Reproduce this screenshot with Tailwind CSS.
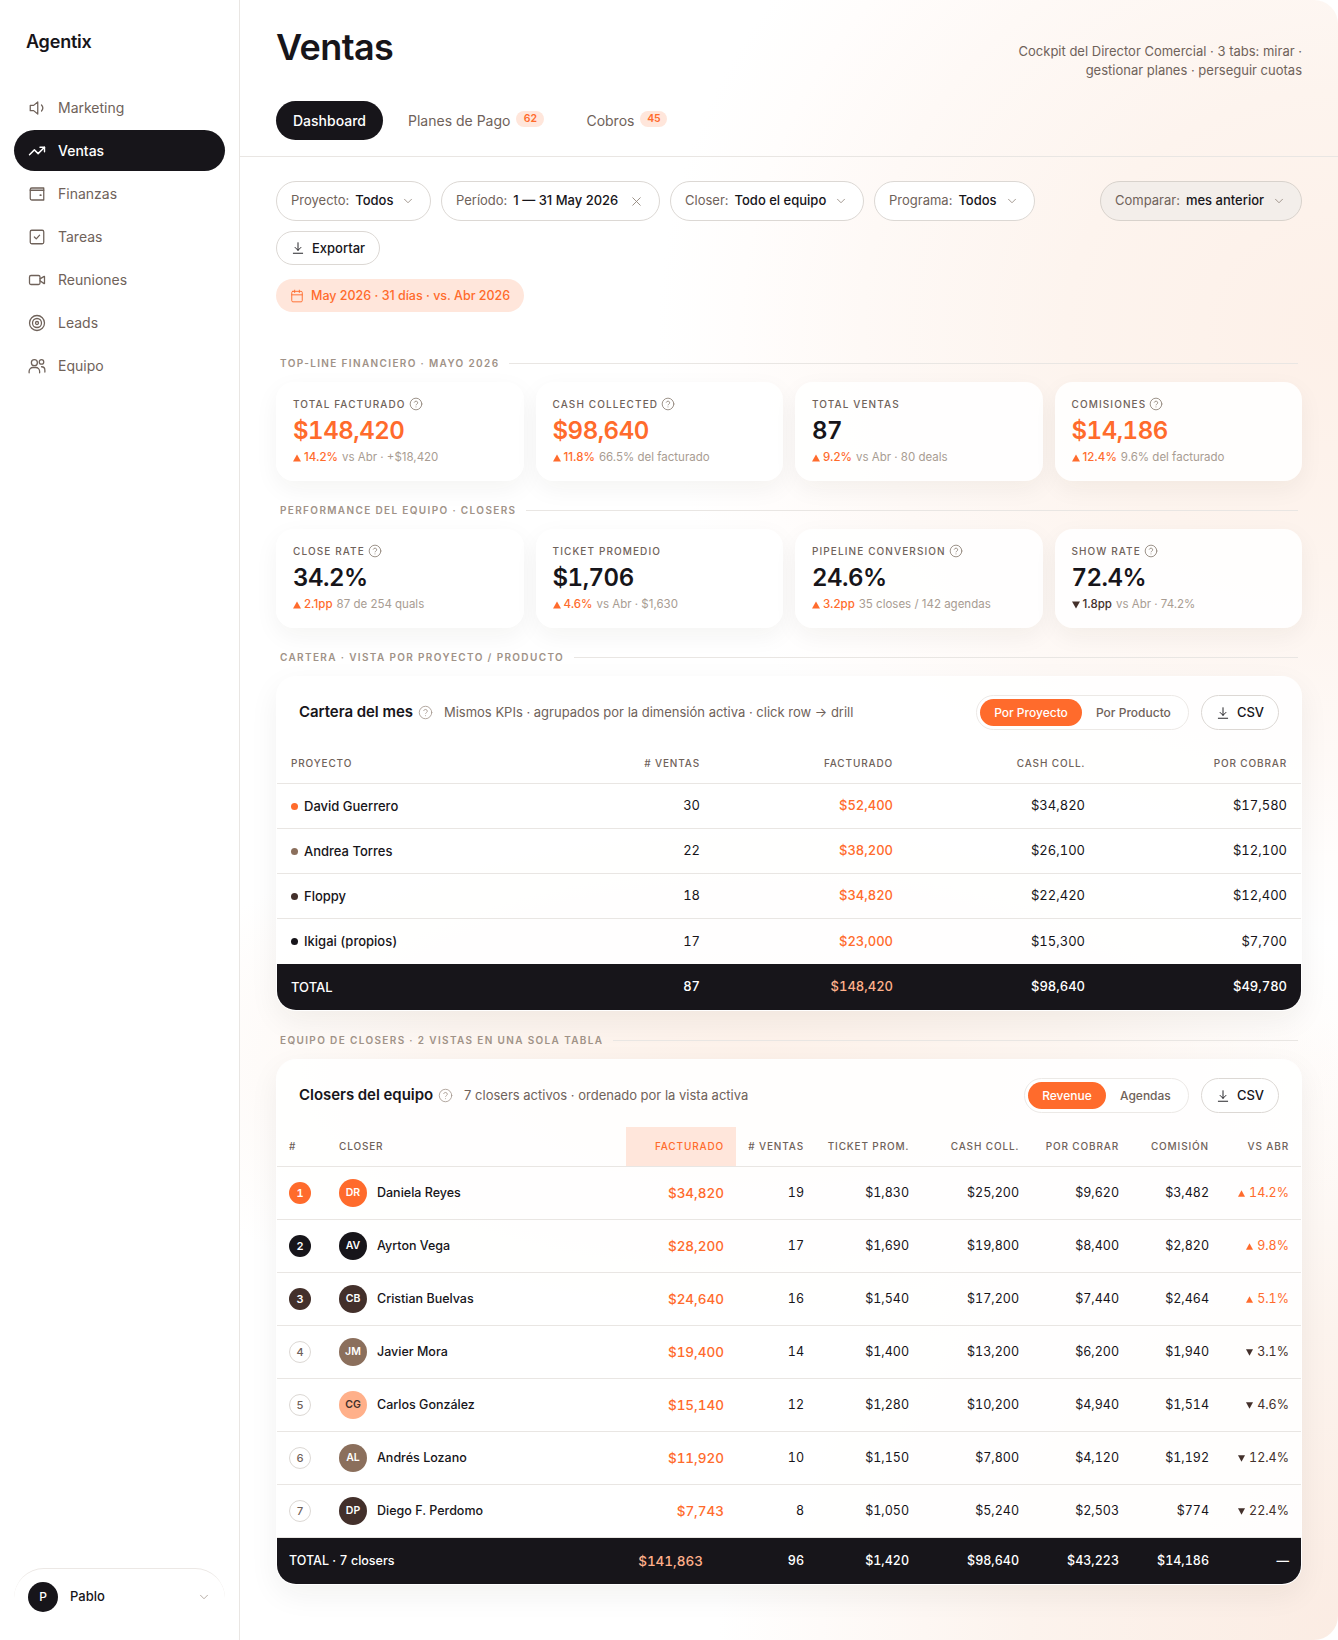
<!DOCTYPE html>
<html lang="es">
<head>
<meta charset="UTF-8">
<meta name="viewport" content="width=device-width, initial-scale=1.0">
<script src="https://cdn.jsdelivr.net/npm/@tailwindcss/browser@4"></script>
<title>Ventas - Agentix</title>
</head>
<body class="bg-white font-[Inter,sans-serif] text-[#17151a]">

<!-- iconos -->
<svg class="hidden">
  <symbol id="i-mkt" viewBox="0 0 24 24" stroke-linecap="round" stroke-linejoin="round"><path d="M13 4 7.500 8.500H3v7h4.500L13 20z"/><path d="M18 8a6 6 0 0 1 0 8"/></symbol>
  <symbol id="i-trend" viewBox="0 0 24 24" stroke-linecap="round" stroke-linejoin="round"><path d="M22 7l-8.500 8.500-5-5L2 17"/><path d="M16 7h6v6"/></symbol>
  <symbol id="i-wallet" viewBox="0 0 24 24" stroke-linecap="round" stroke-linejoin="round"><path d="M21 20H5a2 2 0 0 1-2-2V6a2 2 0 0 1 2-2h16z"/><path d="M3 7h18"/><path d="M16.500 13.500h.5" stroke-width="2.500"/></symbol>
  <symbol id="i-check" viewBox="0 0 24 24" stroke-linecap="round" stroke-linejoin="round"><rect x="3" y="3" width="18" height="18" rx="2"/><path d="m8.500 12 2.500 2.500 4.500-5"/></symbol>
  <symbol id="i-video" viewBox="0 0 24 24" stroke-linecap="round" stroke-linejoin="round"><rect x="2" y="6" width="14" height="12" rx="2"/><path d="m16 13 5 3.500a.5.5 0 0 0 1-.4V7.900a.5.5 0 0 0-1-.4l-5 3"/></symbol>
  <symbol id="i-target" viewBox="0 0 24 24" stroke-linecap="round" stroke-linejoin="round"><circle cx="12" cy="12" r="10"/><circle cx="12" cy="12" r="6"/><circle cx="12" cy="12" r="2"/></symbol>
  <symbol id="i-users" viewBox="0 0 24 24" stroke-linecap="round" stroke-linejoin="round"><circle cx="8.500" cy="7.500" r="4"/><circle cx="18" cy="6.500" r="3"/><path d="M1.500 21v-2a5 5 0 0 1 5-5h4a5 5 0 0 1 5 5v2"/><path d="M18 13a4.500 4.500 0 0 1 4.500 4.500V20"/></symbol>
  <symbol id="i-chev" viewBox="0 0 24 24" stroke-linecap="round" stroke-linejoin="round"><path d="m6 9 6 6 6-6"/></symbol>
  <symbol id="i-x" viewBox="0 0 24 24" stroke-linecap="round" stroke-linejoin="round"><path d="M18 6 6 18"/><path d="m6 6 12 12"/></symbol>
  <symbol id="i-down" viewBox="0 0 24 24" stroke-linecap="round" stroke-linejoin="round"><path d="M12 3v13"/><path d="m7 11 5 5 5-5"/><path d="M4 21h16"/></symbol>
  <symbol id="i-cal" viewBox="0 0 24 24" stroke-linecap="round" stroke-linejoin="round"><rect x="3" y="4" width="18" height="18" rx="2"/><path d="M16 2v4"/><path d="M8 2v4"/><path d="M3 10h18"/></symbol>
  <symbol id="i-help" viewBox="0 0 24 24" stroke-linecap="round" stroke-linejoin="round"><circle cx="12" cy="12" r="10"/><path d="M9.100 9a3 3 0 0 1 5.800 1c0 2-2.900 2.500-2.900 3.500"/><path d="M12 17h.01"/></symbol>
  <symbol id="t-up" viewBox="0 0 10 10"><path d="M5 .5 10 9.500H0z"/></symbol>
  <symbol id="t-dn" viewBox="0 0 10 10"><path d="M5 9.500 0 .5h10z"/></symbol>
</svg>

<div class="w-[1338px] h-[1640px] flex overflow-hidden rounded-[24px] bg-white">

  <!-- sidebar -->
  <aside class="w-[240px] shrink-0 border-r border-[#e9e6e3] flex flex-col bg-white">
    <div class="pl-[26px] pt-[29px] h-[87px] text-[18px] leading-[26px] font-semibold tracking-[-0.2px] text-[#17151a]">Agentix</div>
    <nav class="px-[14px] flex flex-col gap-[2px] text-[14px] text-[#6f625a]">
      <a class="h-[41px] pl-[14px] flex items-center gap-[12px] rounded-full"><svg class="w-[18px] h-[18px] fill-none stroke-current stroke-[1.7]"><use href="#i-mkt"/></svg>Marketing</a>
      <a class="h-[41px] pl-[14px] flex items-center gap-[12px] rounded-full bg-[#17151a] text-white font-medium"><svg class="w-[18px] h-[18px] fill-none stroke-current stroke-[1.9]"><use href="#i-trend"/></svg>Ventas</a>
      <a class="h-[41px] pl-[14px] flex items-center gap-[12px] rounded-full"><svg class="w-[18px] h-[18px] fill-none stroke-current stroke-[1.7]"><use href="#i-wallet"/></svg>Finanzas</a>
      <a class="h-[41px] pl-[14px] flex items-center gap-[12px] rounded-full"><svg class="w-[18px] h-[18px] fill-none stroke-current stroke-[1.7]"><use href="#i-check"/></svg>Tareas</a>
      <a class="h-[41px] pl-[14px] flex items-center gap-[12px] rounded-full"><svg class="w-[18px] h-[18px] fill-none stroke-current stroke-[1.7]"><use href="#i-video"/></svg>Reuniones</a>
      <a class="h-[41px] pl-[14px] flex items-center gap-[12px] rounded-full"><svg class="w-[18px] h-[18px] fill-none stroke-current stroke-[1.7]"><use href="#i-target"/></svg>Leads</a>
      <a class="h-[41px] pl-[14px] flex items-center gap-[12px] rounded-full"><svg class="w-[18px] h-[18px] fill-none stroke-current stroke-[1.7]"><use href="#i-users"/></svg>Equipo</a>
    </nav>
    <div class="mt-auto mx-[14px] h-[72px] rounded-t-[30px] border-t border-[#ece8e5] pl-[14px] pr-[14px] pt-[13px]">
      <div class="flex items-center gap-[12px]">
        <span class="w-[30px] h-[30px] rounded-full bg-[#17151a] text-white text-[12px] font-medium flex items-center justify-center">P</span>
        <span class="text-[13px] font-medium text-[#17151a]">Pablo</span>
        <svg class="ml-auto w-[14px] h-[14px] fill-none stroke-[#a89c92] stroke-[1.4]"><use href="#i-chev"/></svg>
      </div>
    </div>
  </aside>

  <!-- main -->
  <main class="flex-1 min-w-0 bg-[radial-gradient(680px_600px_at_1098px_330px,#fdf0e8_0%,#fdf4ee_40%,#fef9f6_70%,#fffdfc_88%,transparent_100%),radial-gradient(640px_280px_at_520px_1070px,#fdf1e9_0%,#fdf6f1_50%,transparent_100%),radial-gradient(620px_620px_at_1098px_1640px,#fbece3_0%,#fcf3ed_50%,transparent_100%)]">
    <header class="border-b border-[#e9e6e3] px-9 pt-[24px] pb-[16px]">
      <div class="flex justify-between items-start h-[46px]">
        <h1 class="text-[36px] leading-[46px] font-semibold tracking-[-0.6px]">Ventas</h1>
        <p class="mt-[18px] w-[340px] text-right text-[13px] leading-[19px] text-[#6f625a]">Cockpit del Director Comercial · 3 tabs: mirar · gestionar planes · perseguir cuotas</p>
      </div>
      <div class="mt-[31px] flex items-center text-[14px] text-[#6f625a]">
        <a class="h-[39px] w-[107px] flex items-center justify-center rounded-full bg-[#17151a] text-white font-medium">Dashboard</a>
        <a class="ml-[25px] flex items-center gap-[6px]">Planes de Pago <span class="mb-[3px] h-[16px] w-[28px] rounded-full bg-[#ffe6db] text-[#ff6b2c] text-[10.500px] font-semibold flex items-center justify-center">62</span></a>
        <a class="ml-[42px] flex items-center gap-[6px]">Cobros <span class="mb-[3px] h-[16px] w-[27px] rounded-full bg-[#ffe6db] text-[#ff6b2c] text-[10.500px] font-semibold flex items-center justify-center">45</span></a>
      </div>
    </header>

    <div class="px-9 pt-[24px]">
      <!-- filtros -->
      <div class="flex flex-wrap items-center gap-[10px] text-[13px]">
        <button class="h-[40px] w-[155px] pl-[14px] pr-[15px] rounded-full border border-[#dcd8d4] bg-white flex items-center"><span class="text-[#6f625a]">Proyecto:</span><span class="ml-[6px] font-medium">Todos</span><svg class="ml-auto w-[14px] h-[14px] fill-none stroke-[#8f8379] stroke-[1.4]"><use href="#i-chev"/></svg></button>
        <button class="h-[40px] w-[219px] pl-[14px] pr-[15px] rounded-full border border-[#dcd8d4] bg-white flex items-center"><span class="text-[#6f625a]">Período:</span><span class="ml-[6px] font-medium">1 — 31 May 2026</span><svg class="ml-auto w-[15px] h-[15px] fill-none stroke-[#8f8379] stroke-[1.4]"><use href="#i-x"/></svg></button>
        <button class="h-[40px] w-[194px] pl-[14px] pr-[15px] rounded-full border border-[#dcd8d4] bg-white flex items-center"><span class="text-[#6f625a]">Closer:</span><span class="ml-[6px] font-medium">Todo el equipo</span><svg class="ml-auto w-[14px] h-[14px] fill-none stroke-[#8f8379] stroke-[1.4]"><use href="#i-chev"/></svg></button>
        <button class="h-[40px] w-[161px] pl-[14px] pr-[15px] rounded-full border border-[#dcd8d4] bg-white flex items-center"><span class="text-[#6f625a]">Programa:</span><span class="ml-[6px] font-medium">Todos</span><svg class="ml-auto w-[14px] h-[14px] fill-none stroke-[#8f8379] stroke-[1.4]"><use href="#i-chev"/></svg></button>
        <button class="ml-auto h-[40px] w-[202px] pl-[14px] pr-[15px] rounded-full border border-[#d8d2cc] bg-[#f3eeea] flex items-center"><span class="text-[#6f625a]">Comparar:</span><span class="ml-[6px] font-medium">mes anterior</span><svg class="ml-auto w-[14px] h-[14px] fill-none stroke-[#8f8379] stroke-[1.4]"><use href="#i-chev"/></svg></button>
        <button class="h-[34px] w-[104px] pl-[14px] rounded-full border border-[#dcd8d4] bg-white flex items-center gap-[7px] font-medium"><svg class="w-[14px] h-[14px] fill-none stroke-current stroke-[1.6]"><use href="#i-down"/></svg><span class="pt-px">Exportar</span></button>
      </div>
      <div class="mt-[14px] h-[33px] w-[248px] pl-[14px] rounded-full bg-[#ffe6db] text-[#ff6b2c] text-[12.500px] font-medium flex items-center gap-[7px]"><svg class="w-[14px] h-[14px] fill-none stroke-current stroke-[1.6]"><use href="#i-cal"/></svg><span class="pt-px">May 2026 · 31 días · vs. Abr 2026</span></div>

      <!-- top-line -->
      <div class="mt-[43px] px-1 h-4 flex items-center gap-[10px]"><span class="text-[10px] font-semibold tracking-[1.36px] text-[#a09287] whitespace-nowrap">TOP-LINE FINANCIERO · MAYO 2026</span><span class="flex-1 h-px bg-[#e9e6e3]"></span></div>
      <div class="mt-[11px] grid grid-cols-4 gap-3">
        <div class="h-[99px] rounded-[18px] bg-white/90 shadow-[0_8px_24px_rgba(40,30,20,0.05)] pl-[17px] pt-[14px]">
          <div class="h-4 flex items-center gap-[3px] text-[10px] font-medium tracking-[1.1px] text-[#6f625a]">TOTAL FACTURADO <svg class="w-[14px] h-[14px] fill-none stroke-[#8f8379] stroke-[1.5]"><use href="#i-help"/></svg></div>
          <div class="mt-[3px] h-[32px] leading-[32px] text-[24px] font-semibold tabular-nums tracking-[-0.5px] text-[#ff6b2c]">$148,420</div>
          <div class="mt-[2px] flex items-center text-[11.500px] text-[#a89c92]"><svg class="w-2 h-2 fill-[#ff6b2c]"><use href="#t-up"/></svg><span class="ml-[3px] font-medium text-[#ff6b2c]">14.2%</span><span class="ml-[4px]">vs Abr · +$18,420</span></div>
        </div>
        <div class="h-[99px] rounded-[18px] bg-white/90 shadow-[0_8px_24px_rgba(40,30,20,0.05)] pl-[17px] pt-[14px]">
          <div class="h-4 flex items-center gap-[3px] text-[10px] font-medium tracking-[1.1px] text-[#6f625a]">CASH COLLECTED <svg class="w-[14px] h-[14px] fill-none stroke-[#8f8379] stroke-[1.5]"><use href="#i-help"/></svg></div>
          <div class="mt-[3px] h-[32px] leading-[32px] text-[24px] font-semibold tabular-nums tracking-[-0.5px] text-[#ff6b2c]">$98,640</div>
          <div class="mt-[2px] flex items-center text-[11.500px] text-[#a89c92]"><svg class="w-2 h-2 fill-[#ff6b2c]"><use href="#t-up"/></svg><span class="ml-[3px] font-medium text-[#ff6b2c]">11.8%</span><span class="ml-[4px]">66.5% del facturado</span></div>
        </div>
        <div class="h-[99px] rounded-[18px] bg-white/90 shadow-[0_8px_24px_rgba(40,30,20,0.05)] pl-[17px] pt-[14px]">
          <div class="h-4 flex items-center gap-[3px] text-[10px] font-medium tracking-[1.1px] text-[#6f625a]">TOTAL VENTAS</div>
          <div class="mt-[3px] h-[32px] leading-[32px] text-[24px] font-semibold tabular-nums tracking-[-0.5px]">87</div>
          <div class="mt-[2px] flex items-center text-[11.500px] text-[#a89c92]"><svg class="w-2 h-2 fill-[#ff6b2c]"><use href="#t-up"/></svg><span class="ml-[3px] font-medium text-[#ff6b2c]">9.2%</span><span class="ml-[4px]">vs Abr · 80 deals</span></div>
        </div>
        <div class="h-[99px] rounded-[18px] bg-white/90 shadow-[0_8px_24px_rgba(40,30,20,0.05)] pl-[17px] pt-[14px]">
          <div class="h-4 flex items-center gap-[3px] text-[10px] font-medium tracking-[1.1px] text-[#6f625a]">COMISIONES <svg class="w-[14px] h-[14px] fill-none stroke-[#8f8379] stroke-[1.5]"><use href="#i-help"/></svg></div>
          <div class="mt-[3px] h-[32px] leading-[32px] text-[24px] font-semibold tabular-nums tracking-[-0.5px] text-[#ff6b2c]">$14,186</div>
          <div class="mt-[2px] flex items-center text-[11.500px] text-[#a89c92]"><svg class="w-2 h-2 fill-[#ff6b2c]"><use href="#t-up"/></svg><span class="ml-[3px] font-medium text-[#ff6b2c]">12.4%</span><span class="ml-[4px]">9.6% del facturado</span></div>
        </div>
      </div>

      <!-- performance -->
      <div class="mt-[21px] px-1 h-4 flex items-center gap-[10px]"><span class="text-[10px] font-semibold tracking-[1.36px] text-[#a09287] whitespace-nowrap">PERFORMANCE DEL EQUIPO · CLOSERS</span><span class="flex-1 h-px bg-[#e9e6e3]"></span></div>
      <div class="mt-[11px] grid grid-cols-4 gap-3">
        <div class="h-[99px] rounded-[18px] bg-white/90 shadow-[0_8px_24px_rgba(40,30,20,0.05)] pl-[17px] pt-[14px]">
          <div class="h-4 flex items-center gap-[3px] text-[10px] font-medium tracking-[1.1px] text-[#6f625a]">CLOSE RATE <svg class="w-[14px] h-[14px] fill-none stroke-[#8f8379] stroke-[1.5]"><use href="#i-help"/></svg></div>
          <div class="mt-[3px] h-[32px] leading-[32px] text-[24px] font-semibold tabular-nums tracking-[-0.5px]">34.2%</div>
          <div class="mt-[2px] flex items-center text-[11.500px] text-[#a89c92]"><svg class="w-2 h-2 fill-[#ff6b2c]"><use href="#t-up"/></svg><span class="ml-[3px] font-medium text-[#ff6b2c]">2.1pp</span><span class="ml-[4px]">87 de 254 quals</span></div>
        </div>
        <div class="h-[99px] rounded-[18px] bg-white/90 shadow-[0_8px_24px_rgba(40,30,20,0.05)] pl-[17px] pt-[14px]">
          <div class="h-4 flex items-center gap-[3px] text-[10px] font-medium tracking-[1.1px] text-[#6f625a]">TICKET PROMEDIO</div>
          <div class="mt-[3px] h-[32px] leading-[32px] text-[24px] font-semibold tabular-nums tracking-[-0.5px]">$1,706</div>
          <div class="mt-[2px] flex items-center text-[11.500px] text-[#a89c92]"><svg class="w-2 h-2 fill-[#ff6b2c]"><use href="#t-up"/></svg><span class="ml-[3px] font-medium text-[#ff6b2c]">4.6%</span><span class="ml-[4px]">vs Abr · $1,630</span></div>
        </div>
        <div class="h-[99px] rounded-[18px] bg-white/90 shadow-[0_8px_24px_rgba(40,30,20,0.05)] pl-[17px] pt-[14px]">
          <div class="h-4 flex items-center gap-[3px] text-[10px] font-medium tracking-[1.1px] text-[#6f625a]">PIPELINE CONVERSION <svg class="w-[14px] h-[14px] fill-none stroke-[#8f8379] stroke-[1.5]"><use href="#i-help"/></svg></div>
          <div class="mt-[3px] h-[32px] leading-[32px] text-[24px] font-semibold tabular-nums tracking-[-0.5px]">24.6%</div>
          <div class="mt-[2px] flex items-center text-[11.500px] text-[#a89c92]"><svg class="w-2 h-2 fill-[#ff6b2c]"><use href="#t-up"/></svg><span class="ml-[3px] font-medium text-[#ff6b2c]">3.2pp</span><span class="ml-[4px]">35 closes / 142 agendas</span></div>
        </div>
        <div class="h-[99px] rounded-[18px] bg-white/90 shadow-[0_8px_24px_rgba(40,30,20,0.05)] pl-[17px] pt-[14px]">
          <div class="h-4 flex items-center gap-[3px] text-[10px] font-medium tracking-[1.1px] text-[#6f625a]">SHOW RATE <svg class="w-[14px] h-[14px] fill-none stroke-[#8f8379] stroke-[1.5]"><use href="#i-help"/></svg></div>
          <div class="mt-[3px] h-[32px] leading-[32px] text-[24px] font-semibold tabular-nums tracking-[-0.5px]">72.4%</div>
          <div class="mt-[2px] flex items-center text-[11.500px] text-[#a89c92]"><svg class="w-2 h-2 fill-[#43302b]"><use href="#t-dn"/></svg><span class="ml-[3px] font-medium text-[#43302b]">1.8pp</span><span class="ml-[4px]">vs Abr · 74.2%</span></div>
        </div>
      </div>

      <!-- cartera -->
      <div class="mt-[21px] px-1 h-4 flex items-center gap-[10px]"><span class="text-[10px] font-semibold tracking-[1.36px] text-[#a09287] whitespace-nowrap">CARTERA · VISTA POR PROYECTO / PRODUCTO</span><span class="flex-1 h-px bg-[#e9e6e3]"></span></div>
      <section class="mt-[11px] rounded-[20px] border border-white bg-white/90 shadow-[0_10px_30px_rgba(40,30,20,0.06)] overflow-hidden">
        <div class="h-[67px] pt-[18px] pl-[22px] pr-[22px] flex items-start">
          <div class="h-[35px] flex items-center">
            <h2 class="text-[15px] font-semibold tracking-[-0.05px]">Cartera del mes</h2>
            <svg class="ml-[5px] w-[15px] h-[15px] fill-none stroke-[#a89c92] stroke-[1.4]"><use href="#i-help"/></svg>
            <span class="ml-[11px] text-[13px] text-[#6f625a]">Mismos KPIs · agrupados por la dimensión activa · click row → drill</span>
          </div>
          <div class="ml-auto h-[35px] w-[213px] rounded-full border border-[#ece9e6] bg-white flex items-center pl-[3px] text-[12px] font-medium">
            <span class="h-[27px] w-[102px] rounded-full bg-[#ff6b2c] text-white flex items-center justify-center">Por Proyecto</span>
            <span class="ml-[14px] text-[#6f625a]">Por Producto</span>
          </div>
          <button class="ml-3 h-[35px] w-[78px] rounded-full border border-[#dcd8d4] bg-white flex items-center justify-center gap-[7px] text-[13px] font-medium"><svg class="w-[14px] h-[14px] fill-none stroke-current stroke-[1.6]"><use href="#i-down"/></svg>CSV</button>
        </div>
        <table class="w-full table-fixed border-separate border-spacing-0 text-[13px] tabular-nums">
          <colgroup><col class="w-[237px]"><col class="w-[200px]"><col class="w-[193px]"><col class="w-[192px]"><col class="w-[202px]"></colgroup>
          <thead>
            <tr class="h-[40px] text-[10px] tracking-[0.85px] text-[#6f625a]">
              <th class="border-b border-[#e9e6e3] pl-[14px] text-left font-medium">PROYECTO</th>
              <th class="border-b border-[#e9e6e3] pr-[14px] text-right font-medium"># VENTAS</th>
              <th class="border-b border-[#e9e6e3] pr-[14px] text-right font-medium">FACTURADO</th>
              <th class="border-b border-[#e9e6e3] pr-[14px] text-right font-medium">CASH COLL.</th>
              <th class="border-b border-[#e9e6e3] pr-[14px] text-right font-medium">POR COBRAR</th>
            </tr>
          </thead>
          <tbody>
            <tr class="h-[45px]">
              <td class="border-b border-[#e9e6e3] pl-[14px] pt-[2px] font-medium"><span class="inline-block w-[7px] h-[7px] rounded-full bg-[#ff6b2c] mr-[6px] align-[1px]"></span>David Guerrero</td>
              <td class="border-b border-[#e9e6e3] pr-[14px] text-right">30</td>
              <td class="border-b border-[#e9e6e3] pr-[14px] text-right font-medium text-[#ff6b2c]">$52,400</td>
              <td class="border-b border-[#e9e6e3] pr-[14px] text-right">$34,820</td>
              <td class="border-b border-[#e9e6e3] pr-[14px] text-right">$17,580</td>
            </tr>
            <tr class="h-[45px]">
              <td class="border-b border-[#e9e6e3] pl-[14px] pt-[2px] font-medium"><span class="inline-block w-[7px] h-[7px] rounded-full bg-[#8b6f5c] mr-[6px] align-[1px]"></span>Andrea Torres</td>
              <td class="border-b border-[#e9e6e3] pr-[14px] text-right">22</td>
              <td class="border-b border-[#e9e6e3] pr-[14px] text-right font-medium text-[#ff6b2c]">$38,200</td>
              <td class="border-b border-[#e9e6e3] pr-[14px] text-right">$26,100</td>
              <td class="border-b border-[#e9e6e3] pr-[14px] text-right">$12,100</td>
            </tr>
            <tr class="h-[45px]">
              <td class="border-b border-[#e9e6e3] pl-[14px] pt-[2px] font-medium"><span class="inline-block w-[7px] h-[7px] rounded-full bg-[#43302b] mr-[6px] align-[1px]"></span>Floppy</td>
              <td class="border-b border-[#e9e6e3] pr-[14px] text-right">18</td>
              <td class="border-b border-[#e9e6e3] pr-[14px] text-right font-medium text-[#ff6b2c]">$34,820</td>
              <td class="border-b border-[#e9e6e3] pr-[14px] text-right">$22,420</td>
              <td class="border-b border-[#e9e6e3] pr-[14px] text-right">$12,400</td>
            </tr>
            <tr class="h-[45px]">
              <td class="pl-[14px] font-medium"><span class="inline-block w-[7px] h-[7px] rounded-full bg-[#17151a] mr-[6px] align-[1px]"></span>Ikigai (propios)</td>
              <td class="pr-[14px] text-right">17</td>
              <td class="pr-[14px] text-right font-medium text-[#ff6b2c]">$23,000</td>
              <td class="pr-[14px] text-right">$15,300</td>
              <td class="pr-[14px] text-right">$7,700</td>
            </tr>
            <tr class="h-[46px] bg-[#17151a] text-white font-medium">
              <td class="pl-[14px] pt-[2px]">TOTAL</td>
              <td class="pr-[14px] text-right">87</td>
              <td class="pr-[14px] text-right text-[#ffb08a]">$148,420</td>
              <td class="pr-[14px] text-right">$98,640</td>
              <td class="pr-[14px] text-right">$49,780</td>
            </tr>
          </tbody>
        </table>
      </section>

      <!-- closers -->
      <div class="mt-[21px] px-1 h-4 flex items-center gap-[10px]"><span class="text-[10px] font-semibold tracking-[1.36px] text-[#a09287] whitespace-nowrap">EQUIPO DE CLOSERS · 2 VISTAS EN UNA SOLA TABLA</span><span class="flex-1 h-px bg-[#e9e6e3]"></span></div>
      <section class="mt-[11px] rounded-[20px] border border-white bg-white/90 shadow-[0_10px_30px_rgba(40,30,20,0.06)] overflow-hidden">
        <div class="h-[67px] pt-[18px] pl-[22px] pr-[22px] flex items-start">
          <div class="h-[35px] flex items-center">
            <h2 class="text-[15px] font-semibold tracking-[-0.05px]">Closers del equipo</h2>
            <svg class="ml-[5px] w-[15px] h-[15px] fill-none stroke-[#a89c92] stroke-[1.4]"><use href="#i-help"/></svg>
            <span class="ml-[11px] text-[13px] text-[#6f625a]">7 closers activos · ordenado por la vista activa</span>
          </div>
          <div class="ml-auto h-[35px] w-[165px] rounded-full border border-[#ece9e6] bg-white flex items-center pl-[3px] text-[12px] font-medium">
            <span class="h-[27px] w-[78px] rounded-full bg-[#ff6b2c] text-white flex items-center justify-center">Revenue</span>
            <span class="ml-[14px] text-[#6f625a]">Agendas</span>
          </div>
          <button class="ml-3 h-[35px] w-[78px] rounded-full border border-[#dcd8d4] bg-white flex items-center justify-center gap-[7px] text-[13px] font-medium"><svg class="w-[14px] h-[14px] fill-none stroke-current stroke-[1.6]"><use href="#i-down"/></svg>CSV</button>
        </div>
        <table class="w-full table-fixed border-separate border-spacing-0 text-[12.500px] tabular-nums">
          <colgroup><col class="w-[50px]"><col class="w-[299px]"><col class="w-[110px]"><col class="w-[80px]"><col class="w-[105px]"><col class="w-[110px]"><col class="w-[100px]"><col class="w-[90px]"><col class="w-[80px]"></colgroup>
          <thead>
            <tr class="h-[40px] text-[10px] tracking-[0.85px] text-[#6f625a]">
              <th class="border-b border-[#e9e6e3] pl-[12px] text-left font-medium">#</th>
              <th class="border-b border-[#e9e6e3] pl-[12px] text-left font-medium">CLOSER</th>
              <th class="border-b border-[#e9e6e3] pr-[12px] text-right font-medium bg-[#ffe6db] text-[#ff6b2c]">FACTURADO</th>
              <th class="border-b border-[#e9e6e3] pr-[12px] text-right font-medium"># VENTAS</th>
              <th class="border-b border-[#e9e6e3] pr-[12px] text-right font-medium">TICKET PROM.</th>
              <th class="border-b border-[#e9e6e3] pr-[12px] text-right font-medium">CASH COLL.</th>
              <th class="border-b border-[#e9e6e3] pr-[12px] text-right font-medium">POR COBRAR</th>
              <th class="border-b border-[#e9e6e3] pr-[12px] text-right font-medium">COMISIÓN</th>
              <th class="border-b border-[#e9e6e3] pr-[12px] text-right font-medium">VS ABR</th>
            </tr>
          </thead>
          <tbody>
            <tr class="h-[53px]">
              <td class="border-b border-[#e9e6e3] pl-[12px]"><span class="w-[22px] h-[22px] rounded-full bg-[#ff6b2c] text-white text-[11px] font-semibold flex items-center justify-center">1</span></td>
              <td class="border-b border-[#e9e6e3] pl-[12px]"><div class="flex items-center gap-[10px]"><span class="w-[28px] h-[28px] rounded-full bg-[#ff6b2c] text-white text-[10.500px] font-semibold flex items-center justify-center">DR</span><span class="font-medium">Daniela Reyes</span></div></td>
              <td class="border-b border-[#e9e6e3] pr-[12px] text-right text-[13.500px] font-medium text-[#ff6b2c]">$34,820</td>
              <td class="border-b border-[#e9e6e3] pr-[12px] text-right">19</td>
              <td class="border-b border-[#e9e6e3] pr-[12px] text-right">$1,830</td>
              <td class="border-b border-[#e9e6e3] pr-[12px] text-right">$25,200</td>
              <td class="border-b border-[#e9e6e3] pr-[12px] text-right">$9,620</td>
              <td class="border-b border-[#e9e6e3] pr-[12px] text-right">$3,482</td>
              <td class="border-b border-[#e9e6e3] pr-[12px] text-right text-[#ff6b2c]"><div class="flex items-center justify-end gap-[4px]"><svg class="w-[7px] h-[7px] fill-current"><use href="#t-up"/></svg>14.2%</div></td>
            </tr>
            <tr class="h-[53px]">
              <td class="border-b border-[#e9e6e3] pl-[12px]"><span class="w-[22px] h-[22px] rounded-full bg-[#17151a] text-white text-[11px] font-semibold flex items-center justify-center">2</span></td>
              <td class="border-b border-[#e9e6e3] pl-[12px]"><div class="flex items-center gap-[10px]"><span class="w-[28px] h-[28px] rounded-full bg-[#17151a] text-white text-[10.500px] font-semibold flex items-center justify-center">AV</span><span class="font-medium">Ayrton Vega</span></div></td>
              <td class="border-b border-[#e9e6e3] pr-[12px] text-right text-[13.500px] font-medium text-[#ff6b2c]">$28,200</td>
              <td class="border-b border-[#e9e6e3] pr-[12px] text-right">17</td>
              <td class="border-b border-[#e9e6e3] pr-[12px] text-right">$1,690</td>
              <td class="border-b border-[#e9e6e3] pr-[12px] text-right">$19,800</td>
              <td class="border-b border-[#e9e6e3] pr-[12px] text-right">$8,400</td>
              <td class="border-b border-[#e9e6e3] pr-[12px] text-right">$2,820</td>
              <td class="border-b border-[#e9e6e3] pr-[12px] text-right text-[#ff6b2c]"><div class="flex items-center justify-end gap-[4px]"><svg class="w-[7px] h-[7px] fill-current"><use href="#t-up"/></svg>9.8%</div></td>
            </tr>
            <tr class="h-[53px]">
              <td class="border-b border-[#e9e6e3] pl-[12px]"><span class="w-[22px] h-[22px] rounded-full bg-[#43302b] text-white text-[11px] font-semibold flex items-center justify-center">3</span></td>
              <td class="border-b border-[#e9e6e3] pl-[12px]"><div class="flex items-center gap-[10px]"><span class="w-[28px] h-[28px] rounded-full bg-[#43302b] text-white text-[10.500px] font-semibold flex items-center justify-center">CB</span><span class="font-medium">Cristian Buelvas</span></div></td>
              <td class="border-b border-[#e9e6e3] pr-[12px] text-right text-[13.500px] font-medium text-[#ff6b2c]">$24,640</td>
              <td class="border-b border-[#e9e6e3] pr-[12px] text-right">16</td>
              <td class="border-b border-[#e9e6e3] pr-[12px] text-right">$1,540</td>
              <td class="border-b border-[#e9e6e3] pr-[12px] text-right">$17,200</td>
              <td class="border-b border-[#e9e6e3] pr-[12px] text-right">$7,440</td>
              <td class="border-b border-[#e9e6e3] pr-[12px] text-right">$2,464</td>
              <td class="border-b border-[#e9e6e3] pr-[12px] text-right text-[#ff6b2c]"><div class="flex items-center justify-end gap-[4px]"><svg class="w-[7px] h-[7px] fill-current"><use href="#t-up"/></svg>5.1%</div></td>
            </tr>
            <tr class="h-[53px]">
              <td class="border-b border-[#e9e6e3] pl-[12px]"><span class="w-[22px] h-[22px] rounded-full border border-[#dcd8d4] text-[#6f625a] text-[11px] font-medium flex items-center justify-center">4</span></td>
              <td class="border-b border-[#e9e6e3] pl-[12px]"><div class="flex items-center gap-[10px]"><span class="w-[28px] h-[28px] rounded-full bg-[#8b6f5c] text-white text-[10.500px] font-semibold flex items-center justify-center">JM</span><span class="font-medium">Javier Mora</span></div></td>
              <td class="border-b border-[#e9e6e3] pr-[12px] text-right text-[13.500px] font-medium text-[#ff6b2c]">$19,400</td>
              <td class="border-b border-[#e9e6e3] pr-[12px] text-right">14</td>
              <td class="border-b border-[#e9e6e3] pr-[12px] text-right">$1,400</td>
              <td class="border-b border-[#e9e6e3] pr-[12px] text-right">$13,200</td>
              <td class="border-b border-[#e9e6e3] pr-[12px] text-right">$6,200</td>
              <td class="border-b border-[#e9e6e3] pr-[12px] text-right">$1,940</td>
              <td class="border-b border-[#e9e6e3] pr-[12px] text-right text-[#43302b]"><div class="flex items-center justify-end gap-[4px]"><svg class="w-[7px] h-[7px] fill-current"><use href="#t-dn"/></svg>3.1%</div></td>
            </tr>
            <tr class="h-[53px]">
              <td class="border-b border-[#e9e6e3] pl-[12px]"><span class="w-[22px] h-[22px] rounded-full border border-[#dcd8d4] text-[#6f625a] text-[11px] font-medium flex items-center justify-center">5</span></td>
              <td class="border-b border-[#e9e6e3] pl-[12px]"><div class="flex items-center gap-[10px]"><span class="w-[28px] h-[28px] rounded-full bg-[#ffb08a] text-[#43302b] text-[10.500px] font-semibold flex items-center justify-center">CG</span><span class="font-medium">Carlos González</span></div></td>
              <td class="border-b border-[#e9e6e3] pr-[12px] text-right text-[13.500px] font-medium text-[#ff6b2c]">$15,140</td>
              <td class="border-b border-[#e9e6e3] pr-[12px] text-right">12</td>
              <td class="border-b border-[#e9e6e3] pr-[12px] text-right">$1,280</td>
              <td class="border-b border-[#e9e6e3] pr-[12px] text-right">$10,200</td>
              <td class="border-b border-[#e9e6e3] pr-[12px] text-right">$4,940</td>
              <td class="border-b border-[#e9e6e3] pr-[12px] text-right">$1,514</td>
              <td class="border-b border-[#e9e6e3] pr-[12px] text-right text-[#43302b]"><div class="flex items-center justify-end gap-[4px]"><svg class="w-[7px] h-[7px] fill-current"><use href="#t-dn"/></svg>4.6%</div></td>
            </tr>
            <tr class="h-[53px]">
              <td class="border-b border-[#e9e6e3] pl-[12px]"><span class="w-[22px] h-[22px] rounded-full border border-[#dcd8d4] text-[#6f625a] text-[11px] font-medium flex items-center justify-center">6</span></td>
              <td class="border-b border-[#e9e6e3] pl-[12px]"><div class="flex items-center gap-[10px]"><span class="w-[28px] h-[28px] rounded-full bg-[#8b6f5c] text-white text-[10.500px] font-semibold flex items-center justify-center">AL</span><span class="font-medium">Andrés Lozano</span></div></td>
              <td class="border-b border-[#e9e6e3] pr-[12px] text-right text-[13.500px] font-medium text-[#ff6b2c]">$11,920</td>
              <td class="border-b border-[#e9e6e3] pr-[12px] text-right">10</td>
              <td class="border-b border-[#e9e6e3] pr-[12px] text-right">$1,150</td>
              <td class="border-b border-[#e9e6e3] pr-[12px] text-right">$7,800</td>
              <td class="border-b border-[#e9e6e3] pr-[12px] text-right">$4,120</td>
              <td class="border-b border-[#e9e6e3] pr-[12px] text-right">$1,192</td>
              <td class="border-b border-[#e9e6e3] pr-[12px] text-right text-[#43302b]"><div class="flex items-center justify-end gap-[4px]"><svg class="w-[7px] h-[7px] fill-current"><use href="#t-dn"/></svg>12.4%</div></td>
            </tr>
            <tr class="h-[53px]">
              <td class="border-b border-[#e9e6e3] pl-[12px]"><span class="w-[22px] h-[22px] rounded-full border border-[#dcd8d4] text-[#6f625a] text-[11px] font-medium flex items-center justify-center">7</span></td>
              <td class="border-b border-[#e9e6e3] pl-[12px]"><div class="flex items-center gap-[10px]"><span class="w-[28px] h-[28px] rounded-full bg-[#43302b] text-white text-[10.500px] font-semibold flex items-center justify-center">DP</span><span class="font-medium">Diego F. Perdomo</span></div></td>
              <td class="border-b border-[#e9e6e3] pr-[12px] text-right text-[13.500px] font-medium text-[#ff6b2c]">$7,743</td>
              <td class="border-b border-[#e9e6e3] pr-[12px] text-right">8</td>
              <td class="border-b border-[#e9e6e3] pr-[12px] text-right">$1,050</td>
              <td class="border-b border-[#e9e6e3] pr-[12px] text-right">$5,240</td>
              <td class="border-b border-[#e9e6e3] pr-[12px] text-right">$2,503</td>
              <td class="border-b border-[#e9e6e3] pr-[12px] text-right">$774</td>
              <td class="border-b border-[#e9e6e3] pr-[12px] text-right text-[#43302b]"><div class="flex items-center justify-end gap-[4px]"><svg class="w-[7px] h-[7px] fill-current"><use href="#t-dn"/></svg>22.4%</div></td>
            </tr>
            <tr class="h-[46px] bg-[#17151a] text-white font-medium">
              <td class="pl-[12px]" colspan="2">TOTAL · 7 closers</td>
              <td class="pr-[33px] text-right text-[13.500px] text-[#ffb08a]">$141,863</td>
              <td class="pr-[12px] text-right">96</td>
              <td class="pr-[12px] text-right">$1,420</td>
              <td class="pr-[12px] text-right">$98,640</td>
              <td class="pr-[12px] text-right">$43,223</td>
              <td class="pr-[12px] text-right">$14,186</td>
              <td class="pr-[12px] text-right">—</td>
            </tr>
          </tbody>
        </table>
      </section>
    </div>
  </main>
</div>

</body>
</html>
